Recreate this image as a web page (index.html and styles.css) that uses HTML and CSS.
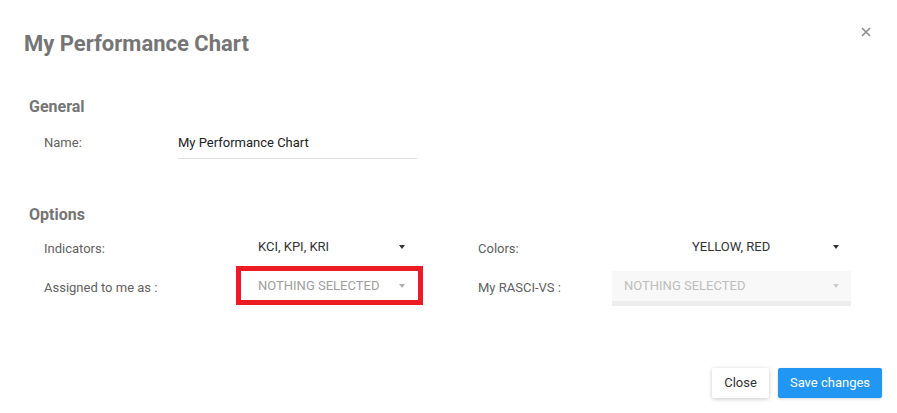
FILE: index.html
```html
<!DOCTYPE html>
<html lang="en">
<head>
<meta charset="utf-8">
<title>My Performance Chart</title>
<link rel="stylesheet" href="styles.css">
</head>
<body>
<div class="modal">
  <div class="modal-header">
    <h1 class="modal-title">My Performance Chart</h1>
    <button class="close-btn" aria-label="Close">
      <svg width="10" height="10" viewBox="0 0 10 10"><path d="M1 1 L9 9 M9 1 L1 9" stroke="#8a8a8a" stroke-width="1.6" fill="none"/></svg>
    </button>
  </div>

  <div class="modal-body">
    <h2 class="section-title section-general">General</h2>
    <div class="name-row">
      <span class="label name-label">Name:</span>
      <div class="text-input">My Performance Chart</div>
    </div>

    <h2 class="section-title section-options">Options</h2>
    <div class="options-grid">
      <div class="group group-left">
        <span class="label">Indicators:</span>
        <div class="frame">
          <div class="select">
            <span class="select-text">KCI, KPI, KRI</span>
            <span class="caret"></span>
          </div>
        </div>
      </div>
      <div class="group group-right">
        <span class="label">Colors:</span>
        <div class="select select-wide select-colors">
          <span class="select-text">YELLOW, RED</span>
          <span class="caret"></span>
        </div>
      </div>
      <div class="group group-left">
        <span class="label">Assigned to me as :</span>
        <div class="frame frame-highlight">
          <div class="select select-empty">
            <span class="select-text">NOTHING SELECTED</span>
            <span class="caret caret-light"></span>
          </div>
        </div>
      </div>
      <div class="group group-right">
        <span class="label">My RASCI-VS :</span>
        <div class="select select-wide select-disabled">
          <span class="select-text">NOTHING SELECTED</span>
          <span class="caret caret-pale"></span>
        </div>
      </div>
    </div>
  </div>

  <div class="modal-footer">
    <button class="btn btn-default">Close</button>
    <button class="btn btn-primary">Save changes</button>
  </div>
</div>
</body>
</html>
```

FILE: styles.css
```css
* {
  box-sizing: border-box;
}

html, body {
  margin: 0;
  padding: 0;
  background: #ffffff;
}

body {
  font-family: Roboto, "Liberation Sans", Arial, sans-serif;
  font-size: 13px;
  color: #333333;
}

.modal {
  width: 897px;
  height: 413px;
  display: flex;
  flex-direction: column;
}

.modal-header {
  display: flex;
  justify-content: space-between;
  align-items: flex-start;
  padding: 27px 24px 0 24px;
}

.modal-title {
  margin: 4px 0 0 0;
  font-size: 22px;
  line-height: 26px;
  font-weight: 700;
  color: #757575;
}

.close-btn {
  border: 0;
  background: transparent;
  padding: 0;
  margin: 0 2px 0 0;
  width: 10px;
  height: 10px;
  display: flex;
}

.modal-body {
  padding: 0 0 0 29px;
}

.section-title {
  margin: 0;
  font-size: 16px;
  line-height: 20px;
  font-weight: 700;
  color: #757575;
}

.section-general {
  margin-top: 40px;
}

.section-options {
  margin-top: 46px;
}

.label {
  color: #616161;
  font-size: 13px;
  line-height: 30px;
  white-space: nowrap;
}

.name-row {
  display: grid;
  grid-template-columns: 134px 239px;
  margin: 11px 0 0 15px;
}

.text-input {
  height: 31px;
  line-height: 30px;
  border-bottom: 1px solid #e0e0e0;
  color: #212121;
}

.options-grid {
  display: grid;
  grid-template-columns: 379px 428px;
  grid-auto-rows: 39px;
  margin: 2px 0 0 15px;
}

.group {
  display: grid;
  align-items: start;
}

.group-left {
  grid-template-columns: 192px 187px;
  width: 379px;
}

.group-right {
  grid-template-columns: 134px 239px;
  margin-left: 55px;
  width: 373px;
}

.group .label {
  padding-top: 7px;
}

.frame {
  border: 5px solid transparent;
  height: 39px;
}

.frame-highlight {
  border-color: #ed1c24;
}

.select {
  display: flex;
  align-items: center;
  justify-content: space-between;
  height: 29px;
  padding: 0 13px 0 17px;
  color: #333333;
  text-transform: uppercase;
  white-space: nowrap;
}

.select-text {
  line-height: 30px;
}

.select-wide {
  height: 35px;
  margin-top: 5px;
  padding: 0 12px 0 12px;
  border-bottom: 5px solid transparent;
}

.select-colors {
  padding-left: 80px;
}

.select-empty .select-text {
  color: #9e9e9e;
}

.select-disabled {
  background: #f8f8f8;
  border-bottom-color: #ededed;
}

.select-disabled .select-text {
  color: #bdbdbd;
}

.caret {
  width: 0;
  height: 0;
  border-left: 3.5px solid transparent;
  border-right: 3.5px solid transparent;
  border-top: 4px solid #333333;
}

.caret-light {
  border-top-color: #b0b0b0;
}

.caret-pale {
  border-top-color: #cccccc;
}

.modal-footer {
  display: flex;
  justify-content: flex-end;
  gap: 9px;
  margin-top: 63px;
  padding-right: 15px;
}

.btn {
  font-family: Roboto, "Liberation Sans", Arial, sans-serif;
  font-size: 13px;
  height: 30px;
  padding: 0;
  border: 0;
  border-radius: 2px;
  line-height: 30px;
  white-space: nowrap;
  text-align: center;
}

.btn-default {
  background: #ffffff;
  color: #333333;
  box-shadow: 0 1px 4px rgba(0, 0, 0, 0.22);
  width: 57px;
}

.btn-primary {
  background: #2196f3;
  color: #ffffff;
  box-shadow: 0 1px 3px rgba(0, 0, 0, 0.15);
  width: 104px;
}
```
